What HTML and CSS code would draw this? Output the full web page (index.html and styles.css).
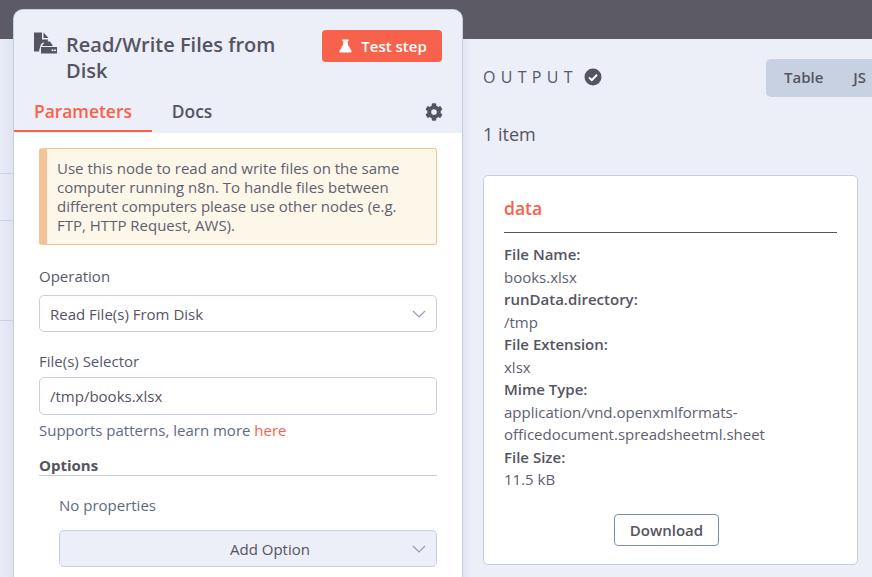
FILE: index.html
```html
<!DOCTYPE html>
<html lang="en">
<head>
  <meta charset="UTF-8">
  <meta name="viewport" content="width=device-width, initial-scale=1.0">
  <title>Read/Write Files from Disk</title>
  <link rel="stylesheet" href="styles.css">
</head>
<body>
  <div class="topbar"></div>
  <div class="main">
    <div class="canvas-edge">
      <div class="edge-row edge-first"></div>
      <div class="edge-row edge-second"></div>
      <div class="edge-row edge-third"></div>
    </div>
    <div class="panel">
      <div class="panel-head">
        <div class="node-title">
          <svg class="node-icon" viewBox="1 1 23 21" width="23" height="22">
            <path fill="#555461" d="M1 1h8v7h6l-.5 3H11c-2 0-3 1.500-3.500 3L6 19.500 6.500 20H1zM10.500 1l5 5.500h-5z"/>
            <path fill="#555461" d="M12 10h5l3 4.500H9zM8 15.500h16v6.500H8z"/>
            <circle cx="19.500" cy="18.800" r="1" fill="#eceef8"/>
            <circle cx="22" cy="18.800" r="1" fill="#eceef8"/>
          </svg>
          <span class="node-name">Read/Write Files from Disk</span>
        </div>
        <button class="test-btn">
          <svg viewBox="0 0 14 16" width="13" height="16">
            <path fill="#fff" d="M3.500 1h7v1.500H9.500v4l4 7c.4.800 0 1.500-1 1.500h-11c-1 0-1.400-.7-1-1.500l4-7v-4H3.500z"/>
          </svg>
          Test step
        </button>
      </div>
      <div class="tabs">
        <span class="tab active">Parameters</span>
        <span class="tab">Docs</span>
        <svg class="gear" viewBox="0 0 512 512" width="18" height="18">
          <path fill="#555461" d="M487 316l-42-25a190 190 0 0 0 0-70l42-25c5-3 7-8 5-14-11-35-30-67-54-93-4-4-10-5-15-2l-42 24a187 187 0 0 0-61-35V28c0-6-4-11-9-12-37-8-74-8-109 0-6 1-10 6-10 12v48a193 193 0 0 0-61 35L89 87c-5-3-11-2-15 2-24 26-43 58-54 93-2 6 0 11 5 14l42 25a190 190 0 0 0 0 70l-42 25c-5 3-7 8-5 14 11 35 30 67 54 93 4 4 10 5 15 2l42-24a187 187 0 0 0 61 35v48c0 6 4 11 10 12 36 8 73 8 108 0 6-1 10-6 10-12v-48a193 193 0 0 0 61-35l42 24c5 3 11 2 15-2 24-26 43-58 54-93 2-6 0-11-5-14zM256 336a80 80 0 1 1 0-160 80 80 0 0 1 0 160z"/>
        </svg>
      </div>
      <div class="panel-body">
        <div class="notice">Use this node to read and write files on the same computer running n8n. To handle files between different computers please use other nodes (e.g. FTP, HTTP Request, AWS).</div>
        <div class="field-label">Operation</div>
        <div class="select-box">
          <span>Read File(s) From Disk</span>
          <svg class="chev" viewBox="0 0 14 8" width="14" height="8"><path d="M1 1l6 6 6-6" fill="none" stroke="#909cb8" stroke-width="1.200"/></svg>
        </div>
        <div class="field-label file-label">File(s) Selector</div>
        <div class="text-box">/tmp/books.xlsx</div>
        <div class="hint">Supports patterns, learn more <a class="link">here</a></div>
        <div class="options-title">Options</div>
        <div class="options-body">
          <div class="no-props">No properties</div>
          <div class="add-option">
            <span>Add Option</span>
            <svg class="chev" viewBox="0 0 14 8" width="14" height="8"><path d="M1 1l6 6 6-6" fill="none" stroke="#909cb8" stroke-width="1.200"/></svg>
          </div>
        </div>
      </div>
    </div>
    <div class="output">
      <div class="output-head">
        <div class="output-title">
          <span class="output-label">OUTPUT</span>
          <svg viewBox="0 0 18 18" width="18" height="18">
            <circle cx="9" cy="9" r="8.500" fill="#555461"/>
            <path d="M5 9.500l2.800 2.700L13 6.800" fill="none" stroke="#fff" stroke-width="2"/>
          </svg>
        </div>
        <div class="view-switch">
          <span class="view-opt">Table</span>
          <span class="view-opt">JS</span>
        </div>
      </div>
      <div class="item-count">1 item</div>
      <div class="card">
        <div class="card-title">data</div>
        <dl class="meta">
          <dt>File Name:</dt>
          <dd>books.xlsx</dd>
          <dt>runData.directory:</dt>
          <dd>/tmp</dd>
          <dt>File Extension:</dt>
          <dd>xlsx</dd>
          <dt>Mime Type:</dt>
          <dd>application/vnd.openxmlformats-<br>officedocument.spreadsheetml.sheet</dd>
          <dt>File Size:</dt>
          <dd>11.5 kB</dd>
        </dl>
        <div class="card-actions">
          <button class="download-btn">Download</button>
        </div>
      </div>
    </div>
  </div>
</body>
</html>
```
FILE: styles.css
```css
* {
  box-sizing: border-box;
}

html, body {
  height: 100%;
}

body {
  margin: 0;
  overflow: hidden;
  font-family: "Open Sans", sans-serif;
  font-size: 15px;
  color: #555461;
  background-color: #eceef8;
}

.topbar {
  height: 39px;
  background-color: #5c5a65;
}

.main {
  display: flex;
  height: 538px;
}

.canvas-edge {
  width: 13px;
  flex-shrink: 0;
  background: linear-gradient(90deg, #e9ecf7, #dfe4f1);
}

.edge-row {
  border-bottom: 1px solid #c9d2e3;
}

.edge-first {
  height: 135px;
}

.edge-second {
  height: 47px;
}

.edge-third {
  height: 100px;
}

.panel {
  width: 450px;
  flex-shrink: 0;
  height: 568px;
  margin-top: -30px;
  background-color: #fff;
  border: 1px solid #c5cfe0;
  border-bottom: 0;
  border-radius: 10px 10px 0 0;
  overflow: hidden;
}

.panel-head {
  display: flex;
  justify-content: space-between;
  align-items: flex-start;
  padding: 20px 20px 0 20px;
  background-color: #eceef8;
}

.node-title {
  display: flex;
  width: 270px;
}

.node-icon {
  flex-shrink: 0;
  margin-right: 10px;
  margin-top: 2px;
}

.node-name {
  font-size: 20px;
  font-weight: 600;
  line-height: 26px;
  margin-top: 2px;
  margin-left: -1px;
}

.test-btn {
  display: flex;
  align-items: center;
  justify-content: center;
  gap: 9px;
  width: 120px;
  height: 32px;
  padding: 0 0 0 2px;
  border: 0;
  border-radius: 4px;
  background-color: #f6624b;
  color: #fff;
  font-family: inherit;
  font-size: 15px;
  font-weight: 600;
}

.tabs {
  display: flex;
  align-items: flex-start;
  height: 49px;
  padding-top: 15px;
  background-color: #eceef8;
}

.tab {
  font-size: 17.400px;
  font-weight: 600;
  line-height: 24px;
  padding: 0 20px;
  height: 33px;
}

.tab.active {
  color: #f6624b;
  border-bottom: 2px solid #f6624b;
}

.gear {
  margin-left: auto;
  margin-right: 19px;
  margin-top: 4px;
}

.panel-body {
  padding: 15px 25px 0 25px;
}

.notice {
  height: 97px;
  padding: 10px 18px 0 10px;
  line-height: 19px;
  background-color: #fdf7ea;
  border: 1px solid #f4c490;
  border-left: 8px solid #f3c295;
  border-radius: 3px;
  color: #5d6070;
}

.field-label {
  margin-top: 21px;
  margin-bottom: 9px;
  line-height: 20px;
  color: #555a6c;
}

.file-label {
  margin-top: 19px;
  margin-bottom: 6px;
}

.select-box, .text-box {
  display: flex;
  align-items: center;
  justify-content: space-between;
  height: 37px;
  padding: 0 10px;
  border: 1px solid #c5cfe0;
  border-radius: 5px;
  background-color: #fff;
}

.text-box {
  height: 38px;
}

.hint {
  margin-top: 5px;
  line-height: 20px;
  color: #5d6a82;
}

.link {
  color: #f6624b;
}

.options-title {
  margin-top: 15px;
  font-weight: 700;
  line-height: 20px;
  border-bottom: 1px solid #c5cfe0;
}

.options-body {
  padding-left: 20px;
}

.no-props {
  margin-top: 19px;
  line-height: 20px;
  color: #5d6a82;
}

.add-option {
  display: flex;
  align-items: center;
  justify-content: space-between;
  height: 37px;
  margin-top: 15px;
  padding: 0 10px 0 170px;
  border: 1px solid #c5cfe0;
  border-radius: 5px;
  background-color: #eceef8;
}

.output {
  flex: 1;
  min-width: 0;
  padding-left: 20px;
  background: linear-gradient(90deg, #e2e6f3, #eceef8 8px);
}

.output-head {
  display: flex;
  justify-content: space-between;
  align-items: center;
  height: 38px;
  margin-top: 20px;
}

.output-title {
  display: flex;
  align-items: center;
  gap: 6px;
  margin-top: -2px;
}

.output-label {
  font-size: 16px;
  letter-spacing: 5.300px;
  color: #555a6c;
}

.view-switch {
  display: flex;
  align-items: center;
  gap: 30px;
  width: 130px;
  margin-right: -24px;
  height: 38px;
  padding-left: 18px;
  padding-bottom: 2px;
  border-radius: 5px 0 0 5px;
  background-color: #c7d1e2;
  font-weight: 600;
}

.item-count {
  margin-top: 26px;
  font-size: 18px;
  line-height: 22px;
}

.card {
  width: 375px;
  height: 390px;
  margin-top: 30px;
  padding: 20px 20px 0 20px;
  background-color: #fff;
  border: 1px solid #c5cfe0;
  border-radius: 5px;
}

.card-title {
  padding-bottom: 11px;
  font-size: 17.500px;
  font-weight: 600;
  line-height: 25px;
  color: #f6624b;
  border-bottom: 1px solid #555461;
}

.meta {
  margin: 10px 0 0 0;
  line-height: 22.500px;
}

.meta dt {
  font-weight: 600;
}

.meta dd {
  margin: 0;
  color: #5d6070;
}

.card-actions {
  display: flex;
  justify-content: center;
  margin-top: 23px;
  padding-right: 8px;
}

.download-btn {
  width: 105px;
  height: 32px;
  background-color: #fff;
  border: 1px solid #7d8fb0;
  border-radius: 4px;
  color: #555461;
  font-family: inherit;
  font-size: 15px;
  font-weight: 600;
}
```
